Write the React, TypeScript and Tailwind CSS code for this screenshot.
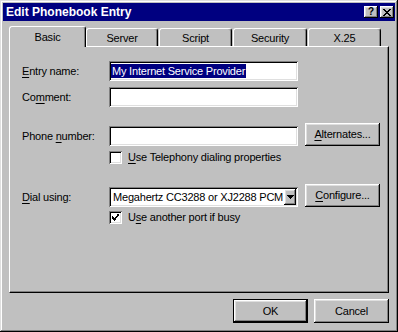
import React from "react";

const raised =
    "bg-[#c0c0c0] shadow-[inset_-1px_-1px_#000,inset_1px_1px_#fff,inset_-2px_-2px_#808080,inset_2px_2px_#dfdfdf]";
const sunken =
    "bg-white shadow-[inset_1px_1px_#808080,inset_-1px_-1px_#fff,inset_2px_2px_#000,inset_-2px_-2px_#dfdfdf]";

function U({children}: {children: React.ReactNode}) {
    return <span className="underline underline-offset-[2px] decoration-1">{children}</span>;
}

function Tab({label, selected, className}: {label: string; selected?: boolean; className: string}) {
    return (
        <div
            className={
                "flex justify-center border-l border-t border-white border-r border-r-black rounded-t-[3px] shadow-[inset_-1px_0_#808080] bg-[#c0c0c0] " +
                (selected ? "h-[21px] -mb-px relative z-10 pt-[2px] " : "h-[18px] pt-[1px] ") +
                className
            }
        >
            {label}
        </div>
    );
}

function Button({children, isDefault, className}: {children: React.ReactNode; isDefault?: boolean; className: string}) {
    if (isDefault) {
        return (
            <div className={"border border-black flex " + className}>
                <div className={"flex-1 flex items-center justify-center " + raised}>{children}</div>
            </div>
        );
    }
    return <div className={"flex items-center justify-center " + raised + " " + className}>{children}</div>;
}

function Checkbox({checked}: {checked?: boolean}) {
    return (
        <div className={"w-[13px] h-[13px] flex items-center justify-center " + sunken}>
            {checked && (
                <svg width="7" height="7" viewBox="0 0 7 7" shapeRendering="crispEdges">
                    <path d="M0 2h1v1h-1zM0 3h2v1h-2zM0 4h3v1h-3zM1 5h3v1h-3zM2 6h1v1h-1zM3 4h1v1h-1zM3 3h2v1h-2zM4 2h2v1h-2zM5 1h1v1h-1zM5 0h2v2h-2zM6 0h1v1h-1z" fill="#000" />
                </svg>
            )}
        </div>
    );
}

export default function App() {
    return (
        <div className="w-[398px] h-[332px] bg-[#c0c0c0] p-[3px] flex flex-col text-[11px] tracking-[-0.2px] text-black font-['Liberation_Sans',Arial,sans-serif] shadow-[inset_-1px_-1px_#000,inset_1px_1px_#dfdfdf,inset_-2px_-2px_#808080,inset_2px_2px_#fff]">
            {/* title bar */}
            <div className="h-[18px] bg-[#000080] flex items-center pl-[3px] pr-[1px]">
                <span className="text-white font-bold text-[12px] tracking-normal">Edit Phonebook Entry</span>
                <div className="flex-1" />
                <div className={"w-[14px] h-[12px] flex items-center justify-center text-[10px] font-bold leading-none " + raised}>?</div>
                <div className={"w-[14px] h-[12px] ml-[2px] flex items-center justify-center " + raised}>
                    <svg width="8" height="7" viewBox="0 0 8 7" shapeRendering="crispEdges">
                        <path d="M0 0h2v1h-2zM6 0h2v1h-2zM1 1h2v1h-2zM5 1h2v1h-2zM2 2h4v1h-4zM3 3h2v1h-2zM2 4h4v1h-4zM1 5h2v1h-2zM5 5h2v1h-2zM0 6h2v1h-2zM6 6h2v1h-2z" fill="#000" />
                    </svg>
                </div>
            </div>

            <div className="px-[6px] flex flex-col">
                {/* tabs */}
                <div className="mt-[5px] h-[20px] flex items-end">
                    <Tab label="Basic" selected className="w-[77px]" />
                    <Tab label="Server" className="w-[72px]" />
                    <Tab label="Script" className="w-[73px] ml-[1px]" />
                    <Tab label="Security" className="w-[74px] ml-[1px]" />
                    <Tab label="X.25" className="w-[73px] ml-[1px]" />
                </div>

                {/* panel */}
                <div className="w-[380px] h-[247px] border-l border-t border-white border-r border-b border-r-black border-b-black shadow-[inset_-1px_-1px_#808080] pl-[12px] pt-[14px] flex flex-col">
                    <div className="flex items-center h-[20px]">
                        <div className="w-[87px]"><U>E</U>ntry name:</div>
                        <div className={"w-[189px] h-[20px] flex items-center pl-[2px] " + sunken}>
                            <span className="bg-[#000080] text-white pl-[1px] pr-[1px] leading-[14px]">My Internet Service Provider</span>
                        </div>
                    </div>
                    <div className="flex items-center h-[20px] mt-[6px]">
                        <div className="w-[87px]">Co<U>m</U>ment:</div>
                        <div className={"w-[189px] h-[20px] " + sunken} />
                    </div>

                    <div className="flex items-start h-[23px] mt-[16px]">
                        <div className="w-[87px] mt-[5px]">Phone <U>n</U>umber:</div>
                        <div className={"w-[189px] h-[20px] mt-[3px] " + sunken} />
                        <Button className="w-[75px] h-[23px] ml-[7px]"><U>A</U>lternates...</Button>
                    </div>
                    <div className="flex items-center h-[13px] mt-[5px] ml-[87px]">
                        <Checkbox />
                        <span className="ml-[6px]"><U>U</U>se Telephony dialing properties</span>
                    </div>

                    <div className="flex items-start h-[23px] mt-[20px]">
                        <div className="w-[87px] mt-[5px]"><U>D</U>ial using:</div>
                        <div className={"w-[189px] h-[20px] mt-[3px] flex items-center pl-[4px] pr-[2px] " + sunken}>
                            <span className="flex-1 whitespace-nowrap overflow-hidden">Megahertz CC3288 or XJ2288 PCM</span>
                            <div className={"w-[12px] h-[16px] flex items-center justify-center " + raised}>
                                <svg width="7" height="4" viewBox="0 0 7 4" shapeRendering="crispEdges">
                                    <path d="M0 0h7v1h-7zM1 1h5v1h-5zM2 2h3v1h-3zM3 3h1v1h-1z" fill="#000" />
                                </svg>
                            </div>
                        </div>
                        <Button className="w-[75px] h-[23px] ml-[7px]"><U>C</U>onfigure...</Button>
                    </div>
                    <div className="flex items-center h-[13px] mt-[4px] ml-[87px]">
                        <Checkbox checked />
                        <span className="ml-[6px]">U<U>s</U>e another port if busy</span>
                    </div>
                </div>

                {/* buttons */}
                <div className="flex justify-end gap-[6px] mt-[6px]">
                    <Button isDefault className="w-[75px] h-[24px]">OK</Button>
                    <Button className="w-[75px] h-[24px]">Cancel</Button>
                </div>
            </div>
        </div>
    );
}
